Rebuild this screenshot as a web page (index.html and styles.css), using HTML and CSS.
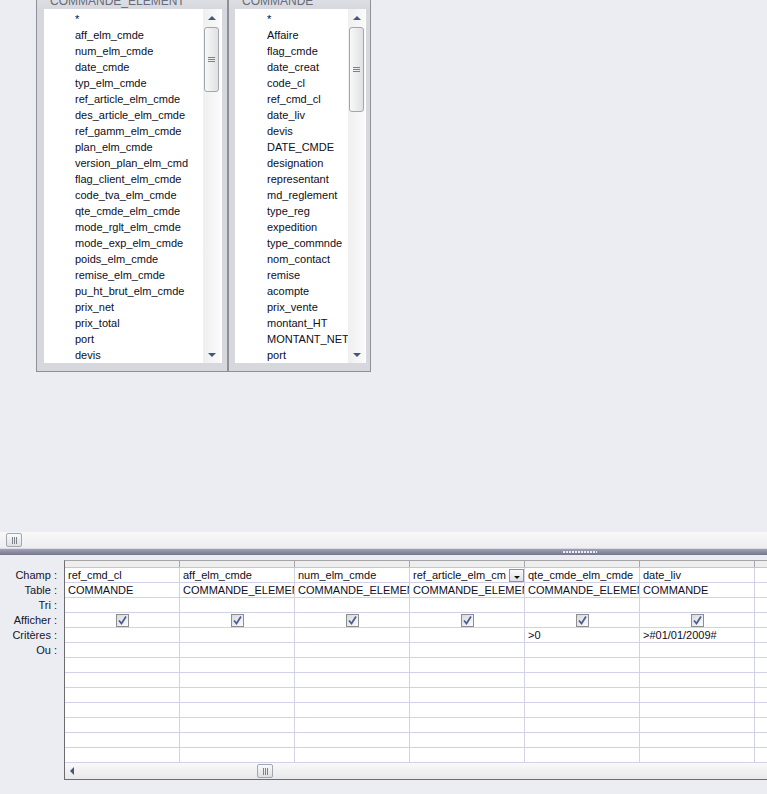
FILE: index.html
```html
<!DOCTYPE html>
<html lang="fr">
<head>
<meta charset="utf-8">
<title>Requête</title>
<link rel="stylesheet" href="styles.css">
</head>
<body>
<div class="design">
  <div class="tables">
    <div class="tbl tbl-1">
      <div class="tbl-title">COMMANDE_ELEMENT</div>
      <div class="tbl-body">
        <ul class="fields">
          <li>*</li><li>aff_elm_cmde</li><li>num_elm_cmde</li><li>date_cmde</li><li>typ_elm_cmde</li><li>ref_article_elm_cmde</li><li>des_article_elm_cmde</li><li>ref_gamm_elm_cmde</li><li>plan_elm_cmde</li><li>version_plan_elm_cmd</li><li>flag_client_elm_cmde</li><li>code_tva_elm_cmde</li><li>qte_cmde_elm_cmde</li><li>mode_rglt_elm_cmde</li><li>mode_exp_elm_cmde</li><li>poids_elm_cmde</li><li>remise_elm_cmde</li><li>pu_ht_brut_elm_cmde</li><li>prix_net</li><li>prix_total</li><li>port</li><li>devis</li>
        </ul>
        <div class="vscroll">
          <div class="vbtn"><span class="tri-up"></span></div>
          <div class="vthumb thumb-1"><span class="vgrip"></span></div>
          <div class="vspace"></div>
          <div class="vbtn"><span class="tri-down"></span></div>
        </div>
      </div>
    </div>
    <div class="tbl tbl-2">
      <div class="tbl-title">COMMANDE</div>
      <div class="tbl-body">
        <ul class="fields">
          <li>*</li><li>Affaire</li><li>flag_cmde</li><li>date_creat</li><li>code_cl</li><li>ref_cmd_cl</li><li>date_liv</li><li>devis</li><li>DATE_CMDE</li><li>designation</li><li>representant</li><li>md_reglement</li><li>type_reg</li><li>expedition</li><li>type_commnde</li><li>nom_contact</li><li>remise</li><li>acompte</li><li>prix_vente</li><li>montant_HT</li><li>MONTANT_NET_</li><li>port</li>
        </ul>
        <div class="vscroll">
          <div class="vbtn"><span class="tri-up"></span></div>
          <div class="vthumb thumb-2"><span class="vgrip"></span></div>
          <div class="vspace"></div>
          <div class="vbtn"><span class="tri-down"></span></div>
        </div>
      </div>
    </div>
  </div>
</div>
<div class="hbar"><div class="hthumb"><span class="hgrip"></span></div></div>
<div class="splitter"><span class="dots"></span></div>
<div class="qbe">
  <div class="labels">
    <div class="lbl">Champ :</div>
    <div class="lbl">Table :</div>
    <div class="lbl">Tri :</div>
    <div class="lbl">Afficher :</div>
    <div class="lbl">Critères :</div>
    <div class="lbl">Ou :</div>
  </div>
  <div class="grid">
    <div class="sel-row"><span></span><span></span><span></span><span></span><span></span><span></span><span></span></div>
    <div class="row"><div class="cell">ref_cmd_cl</div><div class="cell">aff_elm_cmde</div><div class="cell">num_elm_cmde</div><div class="cell cell-drop"><span class="cell-text">ref_article_elm_cm</span><span class="drop"><span class="tri-down-sm"></span></span></div><div class="cell">qte_cmde_elm_cmde</div><div class="cell">date_liv</div><div class="cell"></div></div>
    <div class="row"><div class="cell">COMMANDE</div><div class="cell">COMMANDE_ELEMENT</div><div class="cell">COMMANDE_ELEMENT</div><div class="cell">COMMANDE_ELEMENT</div><div class="cell">COMMANDE_ELEMENT</div><div class="cell">COMMANDE</div><div class="cell"></div></div>
    <div class="row"><div class="cell"></div><div class="cell"></div><div class="cell"></div><div class="cell"></div><div class="cell"></div><div class="cell"></div><div class="cell"></div></div>
    <div class="row">
      <div class="cell cell-chk"><span class="chk"><svg width="11" height="11" viewBox="0 0 11 11"><path d="M2 5.5 L4.5 8.5 L9 1.5" fill="none" stroke="#4a5c94" stroke-width="1.7"/></svg></span></div>
      <div class="cell cell-chk"><span class="chk"><svg width="11" height="11" viewBox="0 0 11 11"><path d="M2 5.5 L4.5 8.5 L9 1.5" fill="none" stroke="#4a5c94" stroke-width="1.7"/></svg></span></div>
      <div class="cell cell-chk"><span class="chk"><svg width="11" height="11" viewBox="0 0 11 11"><path d="M2 5.5 L4.5 8.5 L9 1.5" fill="none" stroke="#4a5c94" stroke-width="1.7"/></svg></span></div>
      <div class="cell cell-chk"><span class="chk"><svg width="11" height="11" viewBox="0 0 11 11"><path d="M2 5.5 L4.5 8.5 L9 1.5" fill="none" stroke="#4a5c94" stroke-width="1.7"/></svg></span></div>
      <div class="cell cell-chk"><span class="chk"><svg width="11" height="11" viewBox="0 0 11 11"><path d="M2 5.5 L4.5 8.5 L9 1.5" fill="none" stroke="#4a5c94" stroke-width="1.7"/></svg></span></div>
      <div class="cell cell-chk"><span class="chk"><svg width="11" height="11" viewBox="0 0 11 11"><path d="M2 5.5 L4.5 8.5 L9 1.5" fill="none" stroke="#4a5c94" stroke-width="1.7"/></svg></span></div>
      <div class="cell"></div>
    </div>
    <div class="row"><div class="cell"></div><div class="cell"></div><div class="cell"></div><div class="cell"></div><div class="cell">&gt;0</div><div class="cell">&gt;#01/01/2009#</div><div class="cell"></div></div>
    <div class="row"><div class="cell"></div><div class="cell"></div><div class="cell"></div><div class="cell"></div><div class="cell"></div><div class="cell"></div><div class="cell"></div></div>
    <div class="row"><div class="cell"></div><div class="cell"></div><div class="cell"></div><div class="cell"></div><div class="cell"></div><div class="cell"></div><div class="cell"></div></div>
    <div class="row"><div class="cell"></div><div class="cell"></div><div class="cell"></div><div class="cell"></div><div class="cell"></div><div class="cell"></div><div class="cell"></div></div>
    <div class="row"><div class="cell"></div><div class="cell"></div><div class="cell"></div><div class="cell"></div><div class="cell"></div><div class="cell"></div><div class="cell"></div></div>
    <div class="row"><div class="cell"></div><div class="cell"></div><div class="cell"></div><div class="cell"></div><div class="cell"></div><div class="cell"></div><div class="cell"></div></div>
    <div class="row"><div class="cell"></div><div class="cell"></div><div class="cell"></div><div class="cell"></div><div class="cell"></div><div class="cell"></div><div class="cell"></div></div>
    <div class="row"><div class="cell"></div><div class="cell"></div><div class="cell"></div><div class="cell"></div><div class="cell"></div><div class="cell"></div><div class="cell"></div></div>
    <div class="row"><div class="cell"></div><div class="cell"></div><div class="cell"></div><div class="cell"></div><div class="cell"></div><div class="cell"></div><div class="cell"></div></div>
    <div class="gscroll">
      <span class="tri-left"></span>
      <div class="hthumb gthumb"><span class="hgrip"></span></div>
    </div>
  </div>
</div>
</body>
</html>
```
FILE: styles.css
```css
* { box-sizing: border-box; }

body {
  margin: 0;
  width: 767px;
  height: 794px;
  overflow: hidden;
  background: #ecedf2;
  font-family: "Liberation Sans", Arial, sans-serif;
  font-size: 11px;
  color: #0e0e24;
}

/* ---------- design area ---------- */
.design {
  height: 532px;
  overflow: hidden;
}

.tables {
  display: flex;
  align-items: flex-start;
  margin-top: -10px;
  padding-left: 36px;
}

.tbl {
  border: 1px solid #8e9097;
  background: #d6d8de;
}
.tbl-1 { width: 192px; }
.tbl-2 { width: 143px; }

.tbl-title {
  height: 18px;
  line-height: 17px;
  padding: 2px 0 0 13px;
  font-size: 12px;
  color: #676b7a;
  background: linear-gradient(#e2e4e9, #d6d8de);
  white-space: nowrap;
  overflow: hidden;
}

.tbl-body {
  display: flex;
  height: 354px;
  background: #fff;
}
.tbl-1 .tbl-body { margin: 0 5px 8px 7px; }
.tbl-2 .tbl-body { margin: 0 4px 8px 6px; }

.fields {
  list-style: none;
  margin: 0;
  padding: 2px 0 0 31px;
  flex: 1;
  min-width: 0;
  overflow: hidden;
}
.tbl-2 .fields { padding-left: 32px; }
.fields li {
  height: 16px;
  line-height: 16px;
  white-space: nowrap;
}

.vscroll {
  width: 17px;
  flex: none;
  display: flex;
  flex-direction: column;
  background: linear-gradient(to right, #efeff0, #fafafa);
  margin-right: 2px;
}
.tbl-2 .vscroll { margin-right: 1px; }

.vbtn {
  height: 17px;
  flex: none;
  display: flex;
  align-items: center;
  justify-content: center;
}
.tri-up {
  width: 0; height: 0;
  border-left: 4px solid transparent;
  border-right: 4px solid transparent;
  border-bottom: 4px solid #45557c;
}
.tri-down {
  width: 0; height: 0;
  border-left: 4px solid transparent;
  border-right: 4px solid transparent;
  border-top: 4px solid #45557c;
}

.vthumb {
  margin: 1px 1px 0;
  border: 1px solid #a2a6ad;
  border-radius: 3px;
  background: linear-gradient(to right, #f8f8f8, #e0e1e3);
  display: flex;
  align-items: center;
  justify-content: center;
}
.thumb-1 { height: 65px; }
.thumb-2 { height: 85px; }
.vgrip {
  width: 7px;
  height: 5px;
  background: repeating-linear-gradient(#7d818a 0 1px, transparent 1px 2px);
}
.vspace { flex: 1; }

/* ---------- middle scroll + splitter ---------- */
.hbar {
  height: 16px;
  background: linear-gradient(#f8f8f9, #eeeef0);
  display: flex;
  align-items: center;
  padding-left: 6px;
}
.hthumb {
  width: 16px;
  height: 14px;
  border: 1px solid #a2a6ad;
  border-radius: 2px;
  background: linear-gradient(#fafafa, #dedfe2);
  display: flex;
  align-items: center;
  justify-content: center;
}
.hgrip {
  width: 5px;
  height: 7px;
  background: repeating-linear-gradient(to right, #7d818a 0 1px, transparent 1px 2px);
}

.splitter {
  height: 7px;
  background: linear-gradient(#dadae4 0 1px, #a1a1b7 1px, #74748c);
  display: flex;
  align-items: center;
  padding-left: 563px;
}
.dots {
  width: 34px;
  height: 2px;
  background: repeating-linear-gradient(to right, #ececf4 0 2px, transparent 2px 3px);
}

/* ---------- QBE grid ---------- */
.qbe {
  display: flex;
  margin-top: 5px;
}

.labels {
  width: 64px;
  flex: none;
  padding-top: 8px;
}
.lbl {
  height: 15px;
  line-height: 14px;
  text-align: right;
  padding-right: 7px;
  color: #14142a;
}

.grid {
  flex: 1;
  min-width: 0;
  overflow: hidden;
  border-top: 1px solid #a6a6a8;
  border-left: 1px solid #6d6d6f;
  border-bottom: 1px solid #6d6d6f;
}

.sel-row {
  display: flex;
  height: 7px;
  border-bottom: 1px solid #c6c6c8;
  background: #eeeeef;
}
.sel-row span {
  width: 115px;
  flex: none;
  border-right: 1px solid #a8a8aa;
}

.row {
  display: flex;
  height: 15px;
  border-bottom: 1px solid #d1d1ea;
  background: #fff;
}
.cell {
  width: 115px;
  flex: none;
  border-right: 1px solid #d1d1ea;
  padding-left: 3px;
  line-height: 14px;
  white-space: nowrap;
  overflow: hidden;
}

.cell-drop {
  display: flex;
  align-items: flex-start;
}
.cell-text {
  flex: 1;
  min-width: 0;
  overflow: hidden;
}
.drop {
  width: 15px;
  height: 13px;
  margin-top: 1px;
  flex: none;
  border: 1px solid #8f9196;
  background: linear-gradient(#fbfbfb, #dfe0e3);
  display: flex;
  align-items: center;
  justify-content: center;
  padding-top: 3px;
}
.tri-down-sm {
  width: 0; height: 0;
  border-left: 3px solid transparent;
  border-right: 3px solid transparent;
  border-top: 3px solid #111;
}

.cell-chk {
  padding-left: 0;
  display: flex;
  align-items: center;
  justify-content: center;
}
.chk {
  width: 13px;
  height: 13px;
  border: 1px solid #8d8e90;
  background: linear-gradient(135deg, #d9dadc, #fbfbfb);
  display: flex;
  align-items: center;
  justify-content: center;
}

.gscroll {
  height: 16px;
  background: linear-gradient(#f9f9f9, #e9e9eb);
  display: flex;
  align-items: center;
  padding-left: 5px;
}
.tri-left {
  width: 0; height: 0;
  border-top: 4px solid transparent;
  border-bottom: 4px solid transparent;
  border-right: 4px solid #45557c;
  flex: none;
}
.gthumb {
  margin-left: 183px;
}
```
